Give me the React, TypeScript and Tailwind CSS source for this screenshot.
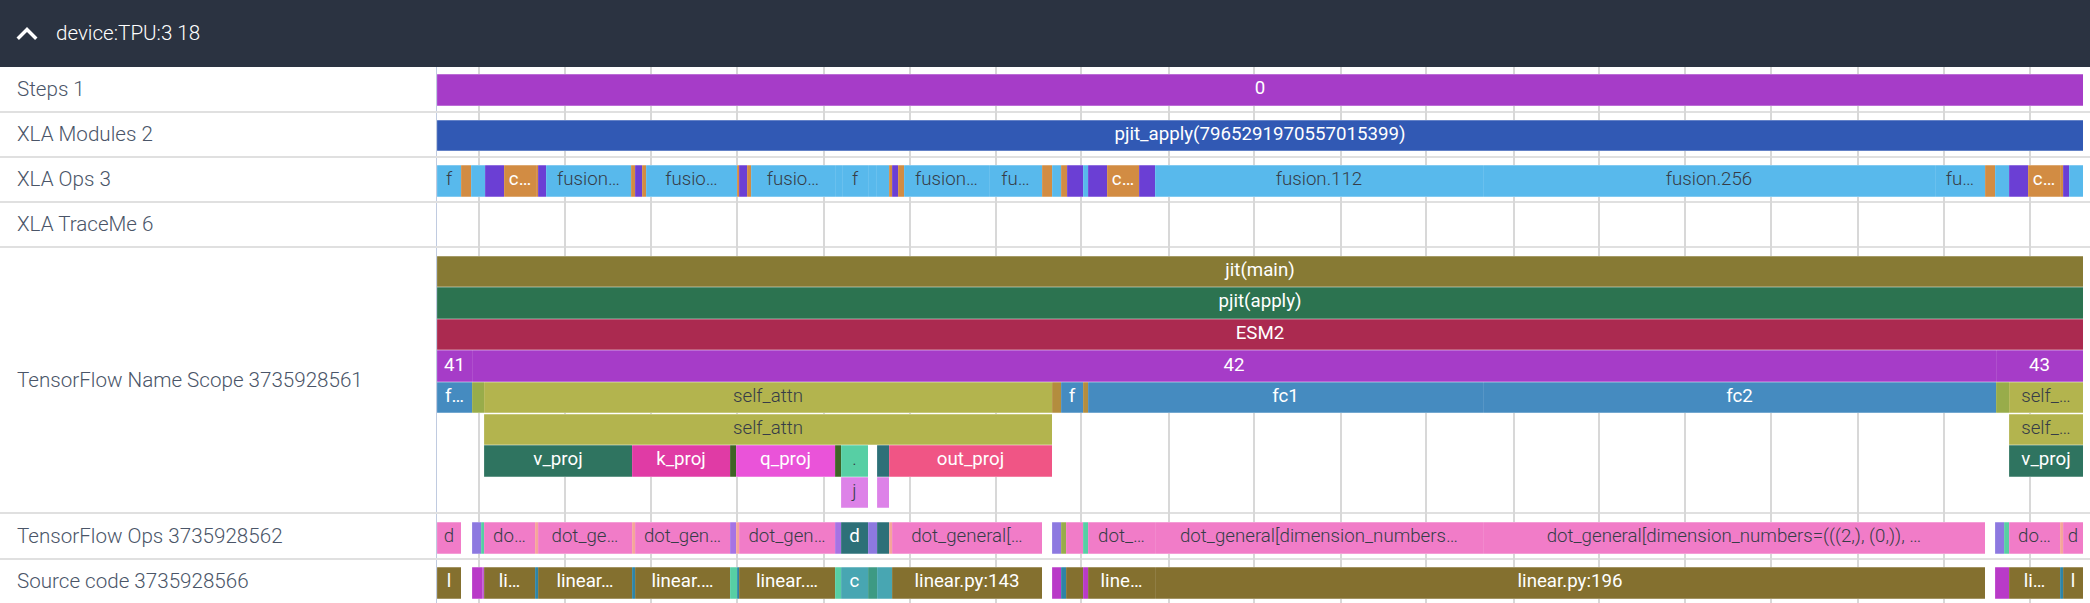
import React from 'react';

type Slice = { x0: number; x1: number; level?: number; color: string; label?: string; dark?: boolean };

const TRACK_LEFT = 437;
const SLICE_H = 31.6;
const GRID = [479, 565, 651, 737, 824, 910, 996, 1081, 1169, 1254, 1341, 1426, 1514, 1599, 1685, 1771, 1858, 1944, 2030];

const SKY = '#58b9ec';
const ORANGE = '#d28c43';
const VIOLET = '#6b3fd4';
const PURPLE = '#a63cc8';
const BLUE = '#458bc0';
const OLIVE = '#b3b44e';
const MOSS = '#98ac4a';
const BROWN = '#b38d3e';
const TEAL = '#2d7078';
const FOREST = '#2f7460';
const LEAF = '#3f6326';
const PINK = '#f17cc8';
const PEACH = '#f5a59a';
const PERI = '#8d79e0';
const MINT = '#57cfa4';
const LILAC = '#a673e4';
const KHAKI = '#84702f';
const CYAN = '#48a6b2';
const SEA = '#3d9a83';
const STEEL = '#2e84a5';
const MAGENTA = '#b93ac8';

const xlaOps: Slice[] = [
  { x0: 437, x1: 461, color: SKY, label: 'f', dark: true },
  { x0: 461, x1: 471, color: ORANGE },
  { x0: 471, x1: 484.5, color: SKY },
  { x0: 484.5, x1: 504, color: VIOLET },
  { x0: 504, x1: 536, color: ORANGE, label: 'c…' },
  { x0: 536, x1: 537.6, color: ORANGE },
  { x0: 537.6, x1: 545.6, color: VIOLET },
  { x0: 545.6, x1: 631.3, color: SKY, label: 'fusion…', dark: true },
  { x0: 631.3, x1: 635, color: ORANGE },
  { x0: 635, x1: 641.6, color: VIOLET },
  { x0: 641.6, x1: 646, color: ORANGE },
  { x0: 646, x1: 736.7, color: SKY, label: 'fusio…', dark: true },
  { x0: 736.7, x1: 739.4, color: ORANGE },
  { x0: 739.4, x1: 746.5, color: VIOLET },
  { x0: 746.5, x1: 751.4, color: ORANGE },
  { x0: 751.4, x1: 835, color: SKY, label: 'fusio…', dark: true },
  { x0: 835, x1: 841.6, color: SKY },
  { x0: 841.6, x1: 867.5, color: SKY, label: 'f', dark: true },
  { x0: 867.5, x1: 876.4, color: SKY },
  { x0: 876.4, x1: 889, color: SKY },
  { x0: 889, x1: 892, color: ORANGE },
  { x0: 892, x1: 898.3, color: VIOLET },
  { x0: 898.3, x1: 903.6, color: ORANGE },
  { x0: 903.6, x1: 989.4, color: SKY, label: 'fusion…', dark: true },
  { x0: 989.4, x1: 1041.6, color: SKY, label: 'fu…', dark: true },
  { x0: 1041.6, x1: 1052, color: ORANGE },
  { x0: 1052, x1: 1061, color: SKY },
  { x0: 1061, x1: 1066.7, color: ORANGE },
  { x0: 1066.7, x1: 1082.7, color: VIOLET },
  { x0: 1082.7, x1: 1088.3, color: SKY },
  { x0: 1088.3, x1: 1107, color: VIOLET },
  { x0: 1107, x1: 1139, color: ORANGE, label: 'c…' },
  { x0: 1139, x1: 1155, color: VIOLET },
  { x0: 1155, x1: 1483, color: SKY, label: 'fusion.112', dark: true },
  { x0: 1483, x1: 1935, color: SKY, label: 'fusion.256', dark: true },
  { x0: 1935, x1: 1985, color: SKY, label: 'fu…', dark: true },
  { x0: 1985, x1: 1995, color: ORANGE },
  { x0: 1995, x1: 2008.7, color: SKY },
  { x0: 2008.7, x1: 2027.5, color: VIOLET },
  { x0: 2027.5, x1: 2059.5, color: ORANGE, label: 'c…' },
  { x0: 2059.5, x1: 2063, color: ORANGE },
  { x0: 2063, x1: 2069, color: VIOLET },
  { x0: 2069, x1: 2083, color: SKY },
];

const nameScope: Slice[] = [
  { x0: 437, x1: 2083, level: 0, color: '#877a34', label: 'jit(main)' },
  { x0: 437, x1: 2083, level: 1, color: '#2c7350', label: 'pjit(apply)' },
  { x0: 437, x1: 2083, level: 2, color: '#ab2a50', label: 'ESM2' },
  { x0: 437, x1: 471.5, level: 3, color: PURPLE, label: '41' },
  { x0: 471.5, x1: 1995.5, level: 3, color: PURPLE, label: '42' },
  { x0: 1995.5, x1: 2083, level: 3, color: PURPLE, label: '43' },
  { x0: 437, x1: 471.5, level: 4, color: BLUE, label: 'f…' },
  { x0: 471.5, x1: 484.3, level: 4, color: MOSS },
  { x0: 484.3, x1: 1052, level: 4, color: OLIVE, label: 'self_attn', dark: true },
  { x0: 1052, x1: 1061, level: 4, color: BROWN },
  { x0: 1061, x1: 1083.4, level: 4, color: BLUE, label: 'f' },
  { x0: 1083.4, x1: 1088.3, level: 4, color: BROWN },
  { x0: 1088.3, x1: 1483, level: 4, color: BLUE, label: 'fc1' },
  { x0: 1483, x1: 1995.5, level: 4, color: BLUE, label: 'fc2' },
  { x0: 1995.5, x1: 2008.7, level: 4, color: MOSS },
  { x0: 2008.7, x1: 2083, level: 4, color: OLIVE, label: 'self_…', dark: true },
  { x0: 484.3, x1: 1052, level: 5, color: OLIVE, label: 'self_attn', dark: true },
  { x0: 2008.7, x1: 2083, level: 5, color: OLIVE, label: 'self_…', dark: true },
  { x0: 484.3, x1: 631.5, level: 6, color: FOREST, label: 'v_proj' },
  { x0: 631.5, x1: 729.8, level: 6, color: '#e03ba5', label: 'k_proj' },
  { x0: 729.8, x1: 736.4, level: 6, color: LEAF },
  { x0: 736.4, x1: 835, level: 6, color: '#ea53d9', label: 'q_proj' },
  { x0: 835, x1: 841.3, level: 6, color: LEAF },
  { x0: 841.3, x1: 867.8, level: 6, color: MINT, label: '.', dark: true },
  { x0: 876.5, x1: 889, level: 6, color: TEAL },
  { x0: 889, x1: 1052, level: 6, color: '#f05585', label: 'out_proj' },
  { x0: 2008.7, x1: 2083, level: 6, color: FOREST, label: 'v_proj' },
  { x0: 841.3, x1: 867.8, level: 7, color: '#dd82e8', label: 'j', dark: true },
  { x0: 876.5, x1: 889, level: 7, color: '#dd82e8' },
];

const tfOps: Slice[] = [
  { x0: 437, x1: 461, color: PINK, label: 'd', dark: true },
  { x0: 471.5, x1: 480.6, color: PERI },
  { x0: 480.6, x1: 484.3, color: MINT },
  { x0: 484.3, x1: 535.3, color: PINK, label: 'do…', dark: true },
  { x0: 535.3, x1: 538.2, color: PEACH },
  { x0: 538.2, x1: 631.5, color: PINK, label: 'dot_ge…', dark: true },
  { x0: 631.5, x1: 635, color: PEACH },
  { x0: 635, x1: 729.8, color: PINK, label: 'dot_gen…', dark: true },
  { x0: 729.8, x1: 736.4, color: LILAC },
  { x0: 736.4, x1: 739.3, color: PEACH },
  { x0: 739.3, x1: 835, color: PINK, label: 'dot_gen…', dark: true },
  { x0: 835, x1: 841.3, color: LILAC },
  { x0: 841.3, x1: 867.8, color: TEAL, label: 'd' },
  { x0: 867.8, x1: 876.5, color: PERI },
  { x0: 876.5, x1: 889, color: TEAL },
  { x0: 889, x1: 891.5, color: PEACH },
  { x0: 891.5, x1: 1042, color: PINK, label: 'dot_general[…', dark: true },
  { x0: 1052, x1: 1060.5, color: PERI },
  { x0: 1060.5, x1: 1066, color: MOSS },
  { x0: 1066, x1: 1083.4, color: PINK },
  { x0: 1083.4, x1: 1088.3, color: MINT },
  { x0: 1088.3, x1: 1155, color: PINK, label: 'dot_…', dark: true },
  { x0: 1155, x1: 1483, color: PINK, label: 'dot_general[dimension_numbers…', dark: true },
  { x0: 1483, x1: 1985, color: PINK, label: 'dot_general[dimension_numbers=(((2,), (0,)), …', dark: true },
  { x0: 1995, x1: 2003.8, color: PERI },
  { x0: 2003.8, x1: 2008.7, color: MINT },
  { x0: 2008.7, x1: 2059.5, color: PINK, label: 'do…', dark: true },
  { x0: 2059.5, x1: 2063, color: PEACH },
  { x0: 2063, x1: 2083, color: PINK, label: 'd', dark: true },
];

const sourceCode: Slice[] = [
  { x0: 437, x1: 461, color: KHAKI, label: 'l' },
  { x0: 471.5, x1: 482, color: MAGENTA },
  { x0: 482, x1: 484.3, color: '#c25bd4' },
  { x0: 484.3, x1: 535.3, color: KHAKI, label: 'li…' },
  { x0: 535.3, x1: 538.2, color: STEEL },
  { x0: 538.2, x1: 631.5, color: KHAKI, label: 'linear…' },
  { x0: 631.5, x1: 635, color: STEEL },
  { x0: 635, x1: 729.8, color: KHAKI, label: 'linear.…' },
  { x0: 729.8, x1: 737.2, color: MINT },
  { x0: 737.2, x1: 739.3, color: STEEL },
  { x0: 739.3, x1: 835, color: KHAKI, label: 'linear.…' },
  { x0: 835, x1: 841.3, color: MINT },
  { x0: 841.3, x1: 867.8, color: CYAN, label: 'c' },
  { x0: 867.8, x1: 876.5, color: SEA },
  { x0: 876.5, x1: 891.5, color: CYAN },
  { x0: 891.5, x1: 1042, color: KHAKI, label: 'linear.py:143' },
  { x0: 1052, x1: 1060.5, color: MAGENTA },
  { x0: 1060.5, x1: 1066, color: STEEL },
  { x0: 1066, x1: 1083.4, color: KHAKI },
  { x0: 1083.4, x1: 1088.3, color: MAGENTA },
  { x0: 1088.3, x1: 1155, color: KHAKI, label: 'line…' },
  { x0: 1155, x1: 1985, color: KHAKI, label: 'linear.py:196' },
  { x0: 1995, x1: 2008.7, color: MAGENTA },
  { x0: 2008.7, x1: 2059.5, color: KHAKI, label: 'li…' },
  { x0: 2059.5, x1: 2063, color: STEEL },
  { x0: 2063, x1: 2083, color: KHAKI, label: 'l' },
];

const SliceBox: React.FC<{ s: Slice }> = ({ s }) => {
  const left = Math.round(s.x0);
  const right = Math.round(s.x1);
  return (
    <div
      className={`absolute flex items-center justify-center overflow-hidden whitespace-nowrap pb-[3px] text-[18.7px] shadow-[inset_0_1px_0_rgba(255,255,255,0.25),inset_0_-1px_0_rgba(255,255,255,0.25),inset_1px_0_0_rgba(255,255,255,0.1)] ${s.dark ? 'text-[#363c47] font-light' : 'text-white font-normal'}`}
      style={{
        left: left - TRACK_LEFT,
        width: right - left,
        top: (s.level ?? 0) * SLICE_H,
        height: SLICE_H,
        backgroundColor: s.color,
      }}
    >
      {s.label}
    </div>
  );
};

const Track: React.FC<{ label: string; rowClass: string; padClass: string; slices: Slice[]; levels?: number; noBorder?: boolean }> = ({
  label,
  rowClass,
  padClass,
  slices,
  levels = 1,
  noBorder,
}) => (
  <div className={`flex ${rowClass} ${noBorder ? '' : 'border-b-2 border-[#e0e0e0]'}`}>
    <div className="w-[436px] shrink-0 flex items-center pl-[17px] text-[20.6px] font-light text-[#4a5568]">{label}</div>
    <div className={`relative flex-1 border-l border-[#c0cbe0] ${padClass}`}>
      {GRID.map((x) => (
        <div key={x} className="absolute top-0 bottom-[-2px] w-[2px] bg-[#d8d8d8]" style={{ left: x - 1 - TRACK_LEFT }} />
      ))}
      <div className="relative w-full" style={{ height: levels * SLICE_H }}>
        {slices.map((s, i) => (
          <SliceBox key={i} s={s} />
        ))}
      </div>
    </div>
  </div>
);

export default function App() {
  return (
    <div className="w-[2090px] h-[603px] overflow-hidden bg-white font-['Roboto',sans-serif]">
      <div className="flex h-[67px] items-center gap-2 bg-[#2b3341] pl-[6px]">
        <svg width="42" height="42" viewBox="0 0 24 24" fill="#ffffff">
          <path d="M12 8l-6 6 1.41 1.41L12 10.83l4.59 4.58L18 14z" />
        </svg>
        <span className="text-[20.6px] font-light text-white">device:TPU:3 18</span>
      </div>
      <Track label="Steps 1" rowClass="h-[46px]" padClass="pt-[7px]" slices={[{ x0: 437, x1: 2083, color: PURPLE, label: '0' }]} />
      <Track label="XLA Modules 2" rowClass="h-[45px]" padClass="pt-[6.5px]" slices={[{ x0: 437, x1: 2083, color: '#3159b4', label: 'pjit_apply(7965291970557015399)' }]} />
      <Track label="XLA Ops 3" rowClass="h-[45px]" padClass="pt-[7px]" slices={xlaOps} />
      <Track label="XLA TraceMe 6" rowClass="h-[45px]" padClass="pt-[7px]" slices={[]} />
      <Track label="TensorFlow Name Scope 3735928561" rowClass="h-[266px]" padClass="pt-[7.5px]" slices={nameScope} levels={8} />
      <Track label="TensorFlow Ops 3735928562" rowClass="h-[46px]" padClass="pt-[8px]" slices={tfOps} />
      <Track label="Source code 3735928566" rowClass="h-[43px]" padClass="pt-[7px]" slices={sourceCode} noBorder />
    </div>
  );
}
